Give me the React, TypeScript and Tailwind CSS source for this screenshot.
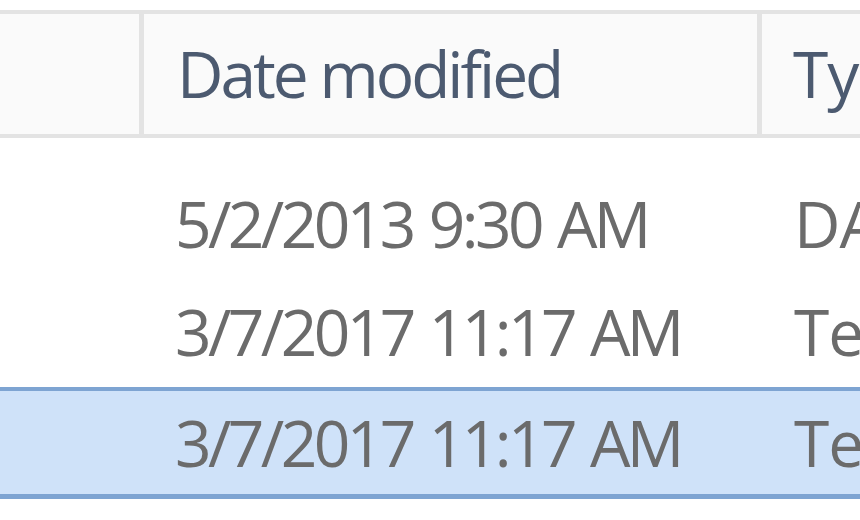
import React from "react";

const font = { fontFamily: '"Open Sans", "Noto Sans", "Liberation Sans", sans-serif' };

function Row({ date, type, selected }: { date: string; type: string; selected?: boolean }) {
  return (
    <div
      className={
        "flex whitespace-nowrap text-[64px] leading-none text-[#6b6b6b] " +
        (selected
          ? "h-[112px] items-center border-t-[4px] border-b-[5px] border-[#7ea4d2] bg-[#cfe2f9]"
          : "h-[108px] items-center")
      }
    >
      <div className="w-[144px] shrink-0" />
      <div className="w-[618px] shrink-0 pl-[31px] tracking-[-3.6px] [word-spacing:3px]">{date}</div>
      <div className="pl-[32px] tracking-[-1px]">{type}</div>
    </div>
  );
}

export default function App() {
  return (
    <div className="w-[860px] h-[520px] overflow-hidden bg-white pt-[10px]" style={font}>
      <div className="flex h-[128px] border-y-[4px] border-[#e3e3e3] bg-[#fafafa] whitespace-nowrap text-[64px] leading-none text-[#4c5a70]">
        <div className="w-[139px] shrink-0" />
        <div className="w-[5px] shrink-0 bg-[#e3e3e3]" />
        <div className="w-[613px] shrink-0 flex items-center pl-[33px] tracking-[-3px]">Date modified</div>
        <div className="w-[5px] shrink-0 bg-[#e3e3e3]" />
        <div className="flex items-center pl-[31px] tracking-[-1px]">Type</div>
      </div>
      <div className="h-[32px]" />
      <Row date="5/2/2013 9:30 AM" type="DAT File" />
      <Row date="3/7/2017 11:17 AM" type="Text Document" />
      <div className="h-[1px]" />
      <Row date="3/7/2017 11:17 AM" type="Text Document" selected />
    </div>
  );
}
